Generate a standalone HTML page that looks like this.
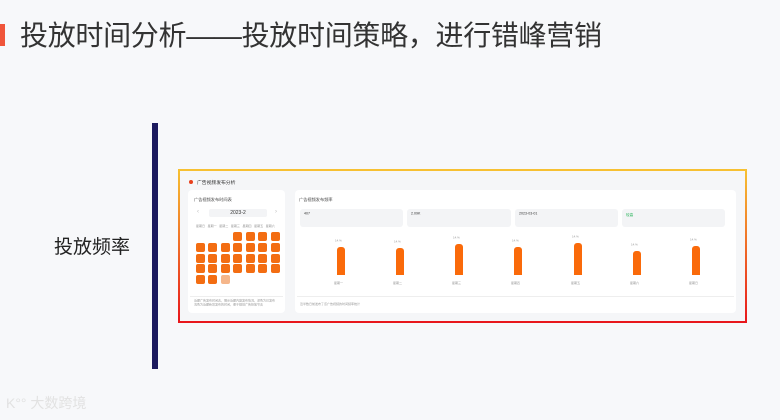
<!DOCTYPE html>
<html><head><meta charset="utf-8"><style>
*{margin:0;padding:0;box-sizing:border-box}
body{width:780px;height:420px;background:#f7f8fa;font-family:"Liberation Sans","Noto Sans CJK SC",sans-serif;position:relative;overflow:hidden}
.a{position:absolute}
.t{font-size:6px;color:#999;white-space:nowrap;transform:scale(.6);transform-origin:left top}
.c{position:absolute;width:9px;height:9px;background:#f36d12;border-radius:2px}
</style></head><body>
<div class="a" style="left:0;top:24px;width:5px;height:22px;background:#f0553a"></div>
<div class="a" style="left:20px;top:19px;font-size:28px;line-height:34px;color:#333;letter-spacing:-0.3px">投放时间分析——投放时间策略，进行错峰营销</div>
<div class="a" style="left:54px;top:232px;font-size:19px;color:#222">投放频率</div>
<div class="a" style="left:152px;top:123px;width:6px;height:246px;background:#1c1a5e"></div>
<div class="a" style="left:6px;top:393px;font-size:14px;color:#e2e2e2">K°° 大数跨境</div>

<div class="a" style="left:178px;top:169px;width:569px;height:154px;padding:2px;background:linear-gradient(#f7c232,#e8161c)">
 <div style="width:100%;height:100%;background:#f5f6f8;position:relative">
  <div class="a" style="left:9px;top:9px;width:4px;height:4px;border-radius:50%;background:#e8401c"></div>
  <div class="a t" style="left:17px;top:8px;color:#333;font-size:8px">广告视频发布分析</div>
  <div class="a" style="left:8px;top:19px;width:97px;height:123px;background:#fff;border-radius:4px"></div>
  <div class="a" style="left:115px;top:19px;width:441px;height:123px;background:#fff;border-radius:4px"></div>
 </div>
</div>
<div class="a t" style="left:194px;top:197px;color:#444;font-size:7px">广告视频发布时间表</div>
<div class="a t" style="left:299px;top:197px;color:#444;font-size:7px">广告视频发布频率</div>
<div class="a" style="left:209px;top:209px;width:58px;height:8px;background:#f3f4f6;border-radius:2px;font-size:5px;text-align:center;color:#333;line-height:8px">2023-2</div>
<div class="a" style="left:197px;top:209px;font-size:6px;color:#bbb">‹</div>
<div class="a" style="left:275px;top:209px;font-size:6px;color:#bbb">›</div>
<div class="a t" style="left:196px;top:224px;font-size:5px;word-spacing:3px">星期日 星期一 星期二 星期三 星期四 星期五 星期六</div>
<div id="cal"></div>
<div class="a t" style="left:194px;top:299px;font-size:5px;line-height:7px">近期广告发布时间表，展示近期内容发布情况，深色为已发布<br>浅色为近期新增发布的时间，便于规划广告投放节奏</div>
<div class="a" style="left:190px;top:296px;width:93px;height:1px;background:#eee"></div>
<div class="a" style="left:297px;top:296px;width:437px;height:1px;background:#eee"></div>
<div class="a t" style="left:300px;top:302px;font-size:5px">近半数日前发布了该广告视频的时间频率统计</div>
<div class="a" style="left:300px;top:209px;width:103px;height:18px;background:#f3f4f6;border-radius:3px"></div>
<div class="a" style="left:407px;top:209px;width:104px;height:18px;background:#f3f4f6;border-radius:3px"></div>
<div class="a" style="left:515px;top:209px;width:103px;height:18px;background:#f3f4f6;border-radius:3px"></div>
<div class="a" style="left:622px;top:209px;width:103px;height:18px;background:#f3f4f6;border-radius:3px"></div>
<div class="a t" style="left:304px;top:212px;color:#333">407</div>
<div class="a t" style="left:411px;top:212px;color:#333">2.09K</div>
<div class="a t" style="left:519px;top:212px;color:#333">2023-03-01</div>
<div class="a t" style="left:626px;top:212px;color:#2db55d">较高</div>
<div id="bars"></div>
<script>
var h='',L=[195.5,208,220.5,233,245.5,258,270.5],T=[232,243,253.5,264,274.5];
for(var r=0;r<5;r++)for(var c=0;c<7;c++){if(r==0&&c<3)continue;if(r==4&&c>2)continue;
h+='<div class="c" style="left:'+L[c]+'px;top:'+T[r]+'px;'+(r==4&&c==2?'background:#f5b68a':'')+'"></div>';}
document.getElementById('cal').innerHTML=h;
var b='',X=[337,396,455,514,574,633,692],Tp=[247,248,244,247,243,251,246],lab=['星期一','星期二','星期三','星期四','星期五','星期六','星期日'];
for(var i=0;i<7;i++){b+='<div class="a" style="left:'+X[i]+'px;top:'+Tp[i]+'px;width:8px;height:'+(275-Tp[i])+'px;background:#fa6a0a;border-radius:3px 3px 0 0"></div>';
b+='<div class="a t" style="left:'+(X[i]-2)+'px;top:'+(Tp[i]-8)+'px;font-size:5px">14.%</div>';
b+='<div class="a t" style="left:'+(X[i]-3)+'px;top:281px;font-size:5px">'+lab[i]+'</div>';}
document.getElementById('bars').innerHTML=b;
</script>
</body></html>
